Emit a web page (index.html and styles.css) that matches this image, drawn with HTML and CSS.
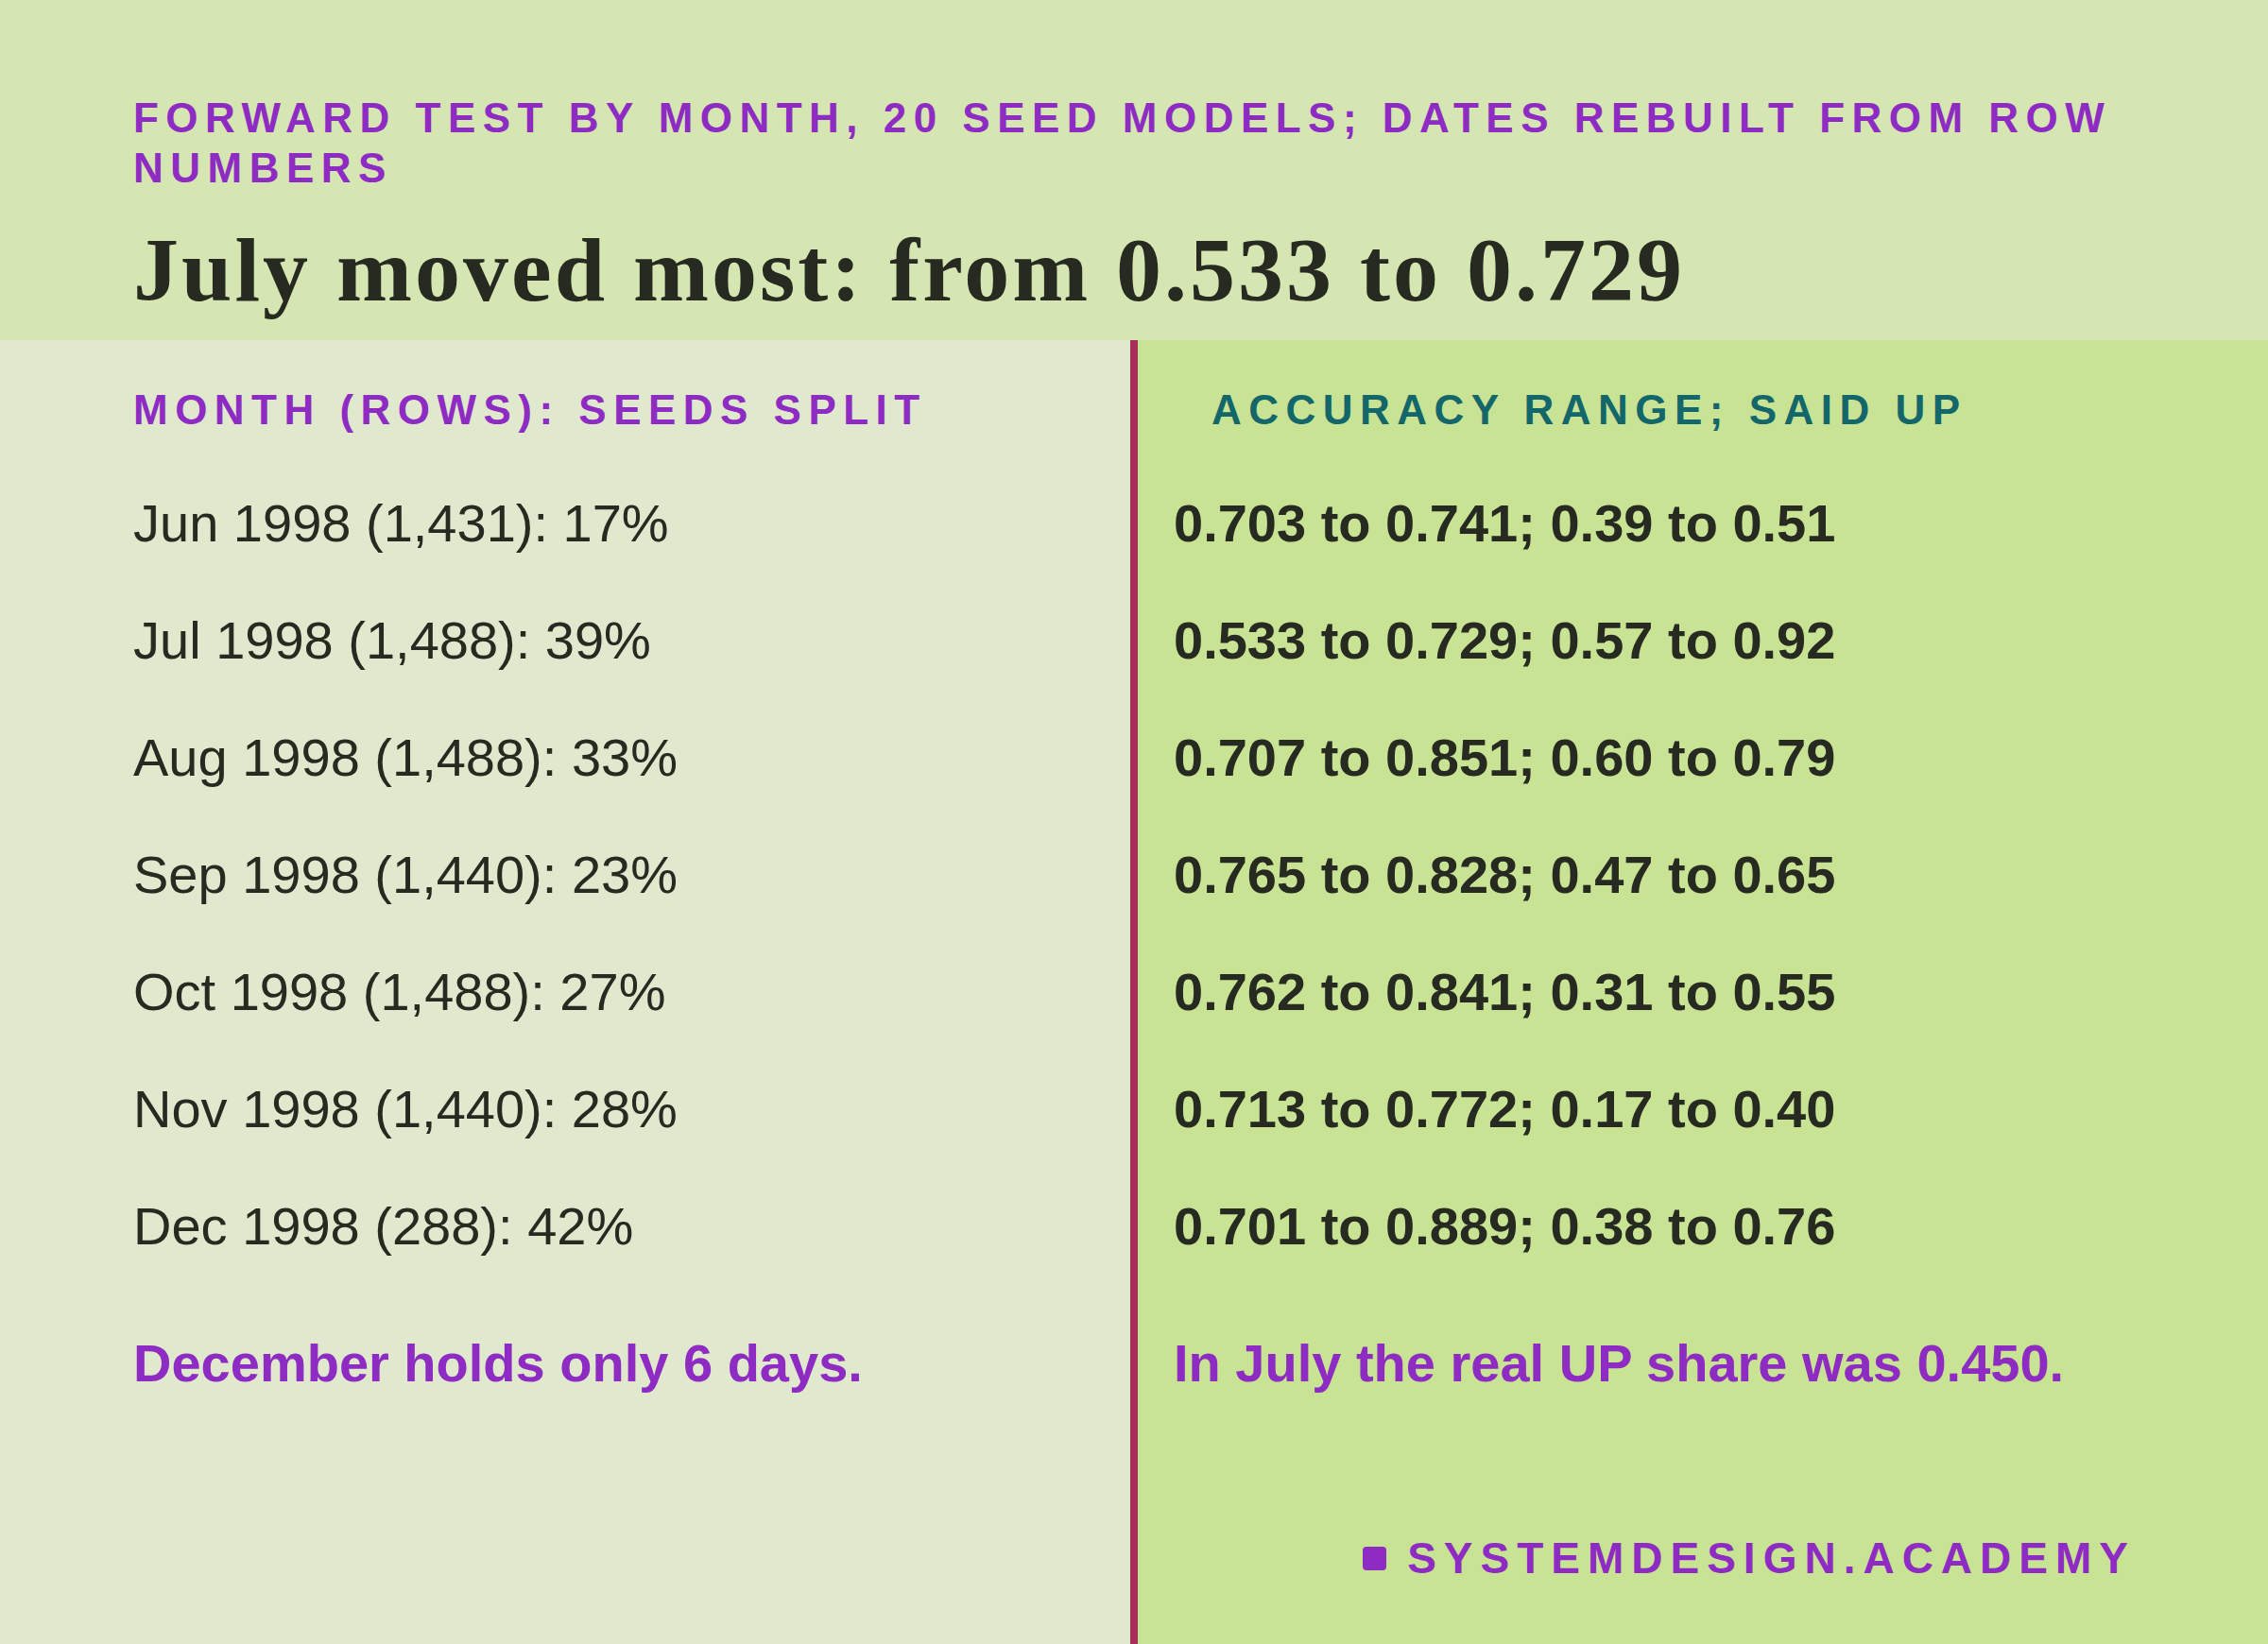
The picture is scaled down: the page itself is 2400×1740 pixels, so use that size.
FILE: index.html
```html
<!DOCTYPE html>
<html lang="en">
<head>
<meta charset="utf-8">
<title>Forward test by month</title>
<link rel="stylesheet" href="styles.css">
</head>
<body>
<div class="page">
  <header class="top">
    <p class="kicker">Forward test by month, 20 seed models; dates rebuilt from row numbers</p>
    <h1 class="title">July moved most: from 0.533 to 0.729</h1>
  </header>
  <main class="cols">
    <section class="col col-left">
      <h2 class="col-head head-purple">Month (rows): seeds split</h2>
      <ul class="rows">
        <li>Jun 1998 (1,431): 17%</li>
        <li>Jul 1998 (1,488): 39%</li>
        <li>Aug 1998 (1,488): 33%</li>
        <li>Sep 1998 (1,440): 23%</li>
        <li>Oct 1998 (1,488): 27%</li>
        <li>Nov 1998 (1,440): 28%</li>
        <li>Dec 1998 (288): 42%</li>
      </ul>
      <p class="note">December holds only 6 days.</p>
    </section>
    <section class="col col-right">
      <h2 class="col-head head-teal">Accuracy range; said up</h2>
      <ul class="rows rows-bold">
        <li>0.703 to 0.741; 0.39 to 0.51</li>
        <li>0.533 to 0.729; 0.57 to 0.92</li>
        <li>0.707 to 0.851; 0.60 to 0.79</li>
        <li>0.765 to 0.828; 0.47 to 0.65</li>
        <li>0.762 to 0.841; 0.31 to 0.55</li>
        <li>0.713 to 0.772; 0.17 to 0.40</li>
        <li>0.701 to 0.889; 0.38 to 0.76</li>
      </ul>
      <p class="note">In July the real UP share was 0.450.</p>
      <div class="brand"><span class="brand-mark"></span><span class="brand-text">systemdesign.academy</span></div>
    </section>
  </main>
</div>
</body>
</html>
```

FILE: styles.css
```css
html, body {
  margin: 0;
  padding: 0;
}
body {
  font-family: "Liberation Sans", Arial, sans-serif;
  color: #262a20;
  background: #c9e394;
}
.page {
  width: 2400px;
  height: 1740px;
  display: flex;
  flex-direction: column;
  overflow: hidden;
}
.top {
  background: #d5e6b2;
  height: 360px;
  box-sizing: border-box;
  padding: 98px 110px 0 141px;
}
.kicker {
  margin: 0;
  font-size: 44px;
  line-height: 53px;
  font-weight: 700;
  letter-spacing: 0.17em;
  text-transform: uppercase;
  color: #8e2bc2;
}
.title {
  margin: 30px 0 0 0;
  font-family: "Liberation Serif", "Times New Roman", serif;
  font-size: 96px;
  line-height: 104px;
  font-weight: 700;
  letter-spacing: 3px;
  color: #262a20;
}
.cols {
  flex: 1;
  display: flex;
}
.col {
  display: flex;
  flex-direction: column;
  box-sizing: border-box;
  padding-top: 47px;
}
.col-left {
  width: 1196px;
  background: #e0e9cd;
  padding-left: 141px;
}
.col-right {
  flex: 1;
  background: #c9e394;
  border-left: 8px solid #a6305a;
  padding-left: 38px;
  padding-right: 148px;
  padding-bottom: 63px;
}
.col-head {
  margin: 0;
  font-size: 44px;
  line-height: 53px;
  font-weight: 700;
  letter-spacing: 0.17em;
  text-transform: uppercase;
}
.head-purple { color: #8e2bc2; }
.head-teal { color: #13666a; padding-left: 40px; }
.rows {
  list-style: none;
  margin: 32px 0 0 0;
  padding: 0;
}
.rows li {
  font-size: 56px;
  line-height: 124px;
  height: 124px;
  white-space: nowrap;
}
.rows-bold li {
  font-weight: 700;
}
.note {
  margin: 49px 0 0 0;
  font-size: 56px;
  line-height: 67px;
  font-weight: 700;
  color: #8e2bc2;
}
.brand {
  margin-top: auto;
  align-self: flex-end;
  display: flex;
  align-items: center;
  gap: 22px;
}
.brand-mark {
  width: 25px;
  height: 25px;
  border-radius: 4px;
  background: #8e2bc2;
}
.brand-text {
  font-size: 46px;
  line-height: 55px;
  font-weight: 700;
  letter-spacing: 8px;
  text-transform: uppercase;
  color: #8e2bc2;
  margin-right: -8px;
}
```
